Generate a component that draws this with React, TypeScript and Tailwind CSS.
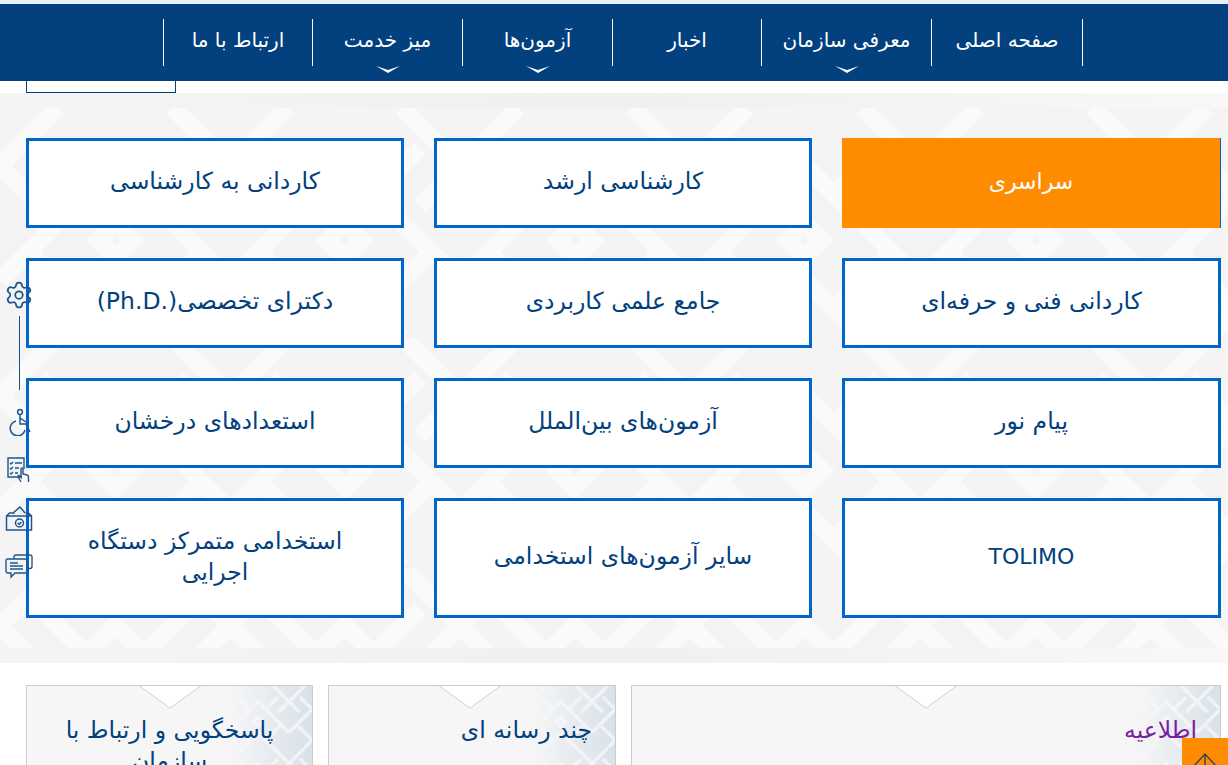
import { Settings } from "lucide-react";

const navItems = [
  { label: "صفحه اصلی", width: "w-[151px]" },
  { label: "معرفی سازمان", width: "w-[170px]", caret: true },
  { label: "اخبار", width: "w-[149px]" },
  { label: "آزمون‌ها", width: "w-[150px]", caret: true },
  { label: "میز خدمت", width: "w-[150px]", caret: true },
  { label: "ارتباط با ما", width: "w-[150px]" },
];

const exams = [
  "سراسری",
  "کارشناسی ارشد",
  "کاردانی به کارشناسی",
  "کاردانی فنی و حرفه‌ای",
  "جامع علمی کاربردی",
  "دکترای تخصصی\u200E(Ph.D.)\u200E",
  "پیام نور",
  "آزمون‌های بین‌الملل",
  "استعدادهای درخشان",
  "TOLIMO",
  "سایر آزمون‌های استخدامی",
  "استخدامی متمرکز دستگاه اجرایی",
];

function PatternBg({ id, stroke, size, width }: { id: string; stroke: string; size: number; width: number }) {
  return (
    <svg className="absolute inset-0 h-full w-full" aria-hidden="true">
      <defs>
        <pattern id={id} width={size} height={size} patternUnits="userSpaceOnUse">
          <g transform={`scale(${size / 200})`} fill="none" stroke={stroke} strokeWidth={width}>
            <path d="M0 50 50 0M50 100 100 50 150 100M150 0 200 50M0 150 50 100M150 100 200 150" />
            <path d="M50 200 100 150 150 200M0 50 35 85M200 50 165 85" />
            <path d="M75 75 35 35M125 75 165 35M75 175 30 130M125 175 170 130" />
            <path d="M85 115 100 100 115 115 100 130z" />
          </g>
        </pattern>
      </defs>
      <rect width="100%" height="100%" fill={`url(#${id})`} />
    </svg>
  );
}

function SideIcons() {
  const cls = "h-[28px] w-[28px] text-[#1d5590]";
  return (
    <div className="absolute left-[5px] top-[280px] flex w-[28px] flex-col items-center">
      <Settings className="h-[30px] w-[30px] shrink-0 text-[#1d5590]" strokeWidth={1.4} />
      <div className="mt-[6px] h-[74px] w-px shrink-0 bg-[#1d4f86]" />
      <svg viewBox="0 0 28 28" className={`${cls} mt-[18px]`} fill="none" stroke="currentColor" strokeWidth="1.5">
        <circle cx="15" cy="4" r="2.4" />
        <path d="M15 7v9h6l4 8" />
        <path d="M15 10l6 4" />
        <path d="M11 13a7.500 7.500 0 1 0 9 9" />
      </svg>
      <svg viewBox="0 0 28 28" className={`${cls} mt-[20px]`} fill="none" stroke="currentColor" strokeWidth="1.4">
        <path d="M17 21H3V2h16v11" />
        <path d="M5 7l1 1 2-2M5 12l1 1 2-2M5 17l1 1 2-2M10 7h7M10 12h4M10 17h3" />
        <path d="M16 26l-3-5c-.6-1.200 1-2 1.800-1l1.200 1.500V13c0-1.400 2-1.400 2 0v5l4 1c1 .3 1.500 1 1.500 2v5" />
      </svg>
      <svg viewBox="0 0 28 28" className={`${cls} mt-[20px]`} fill="none" stroke="currentColor" strokeWidth="1.5">
        <path d="M1.500 12h25v14h-25zM1.500 12l3-3h5M26.500 12l-3-3h-3" />
        <path d="M8 9l7-6 5 6" />
        <circle cx="14.500" cy="19" r="4" />
        <path d="M12.800 19l1.300 1.300 2.200-2.400" />
      </svg>
      <svg viewBox="0 0 28 28" className={`${cls} mt-[20px]`} fill="none" stroke="currentColor" strokeWidth="1.4">
        <path d="M9 7V4.500A2 2 0 0 1 11 3h14a2 2 0 0 1 2 1.500v10a2 2 0 0 1-2 2h-2" />
        <path d="M3 7h17a2 2 0 0 1 2 2v10a2 2 0 0 1-2 2H10l-4 4v-4H3a2 2 0 0 1-2-2V9a2 2 0 0 1 2-2z" />
        <path d="M5 11h8M5 14h13M5 17h13" />
      </svg>
    </div>
  );
}

function Card({ title, className, notch, titleClass }: { title: string; className: string; notch: string; titleClass: string }) {
  return (
    <div className={`relative h-[200px] overflow-hidden border border-[#cccccc] bg-[#f6f6f6] ${className}`}>
      <div className="absolute inset-y-0 right-0 w-[85px] bg-[#d9e1e9]">
        <PatternBg id={`corner-${notch}`} stroke="#f0f3f6" size={62} width={11} />
        <div className="absolute inset-0 bg-gradient-to-l from-transparent to-[#f6f6f6]" />
      </div>
      <svg viewBox="0 0 64 24" className={`absolute -top-px h-[24px] w-[64px] ${notch}`} aria-hidden="true">
        <path d="M0 0 32 23 64 0" fill="#ffffff" stroke="#cfcfcf" strokeWidth="1" />
      </svg>
      <h3 className={`relative mt-[29px] text-[23.5px] leading-[31px] font-normal ${titleClass}`}>{title}</h3>
    </div>
  );
}

export default function App() {
  return (
    <div dir="ltr" className="relative h-[765px] w-[1228px] overflow-hidden bg-white font-['DejaVu_Sans',sans-serif]">
      <div className="h-[4px] bg-[#e6eff2]" />
      <nav dir="rtl" className="flex h-[77px] items-start bg-[#02407e] pt-[15px] pr-[145px]">
        {navItems.map((item) => (
          <a key={item.label} className={`relative flex h-[47px] items-center justify-center border-r border-white text-[20px] text-white last:border-l ${item.width}`}>
            <span className="-mt-[5px]">{item.label}</span>
            {item.caret ? (
              <svg viewBox="0 0 24 8" className="absolute -bottom-[7px] left-1/2 h-[8px] w-[26px] -translate-x-1/2" aria-hidden="true">
                <path d="M0 1 12 5 24 1 12 8z" fill="#ffffff" />
              </svg>
            ) : null}
          </a>
        ))}
      </nav>

      <div className="h-[12px] pl-[26px]">
        <div className="h-full w-[150px] border-x border-b border-[#02407e]" />
      </div>

      <section className="bg-gradient-to-r from-[#f5f5f5] via-[#f0f0f0] to-[#f8f8f8] py-[15px]">
        <div className="relative h-[540px] bg-[#f4f4f4]">
          <PatternBg id="hero" stroke="#fafafa" size={230} width={15} />
          <div dir="rtl" className="relative grid grid-cols-[379px_378px_378px] grid-rows-[90px_90px_90px_120px] gap-x-[30px] gap-y-[30px] pt-[30px] pr-[7px] pl-[26px]">
            {exams.map((exam, i) => (
              <a
                key={exam}
                className={`flex items-center justify-center border-[#0066cc] px-[50px] pb-[3px] text-center leading-[31px] ${
                  i === 0 ? "border-r bg-[#ff8c00] text-white" : "border-[3px] bg-white text-[#02407e]"
                } ${exam === "TOLIMO" || i === 0 ? "text-[22px]" : "text-[23.5px]"}`}
              >
                {exam}
              </a>
            ))}
          </div>
        </div>
      </section>

      <div dir="ltr" className="flex gap-[15px] pt-[22px] pl-[26px]">
        <Card title="پاسخگویی و ارتباط با سازمان" className="w-[287px]" notch="left-[111px]" titleClass="px-[30px] text-center text-[#02407e]" />
        <Card title="چند رسانه ای" className="w-[288px]" notch="left-[109px]" titleClass="pr-[23px] text-right text-[#02407e]" />
        <Card title="اطلاعیه" className="w-[590px]" notch="left-[262px]" titleClass="pr-[23px] text-right text-[#7b1fa2]" />
      </div>

      <SideIcons />

      <button className="absolute top-[738px] left-[1182px] flex h-[46px] w-[46px] items-start justify-center bg-[#ff8c00] pt-[14px]" aria-label="بالا">
        <svg viewBox="0 0 30 24" className="h-[24px] w-[30px]" fill="none" stroke="#3a4650" strokeWidth="1.500">
          <path d="M3 15 15 2 27 15M15 2V24" />
        </svg>
      </button>
    </div>
  );
}
